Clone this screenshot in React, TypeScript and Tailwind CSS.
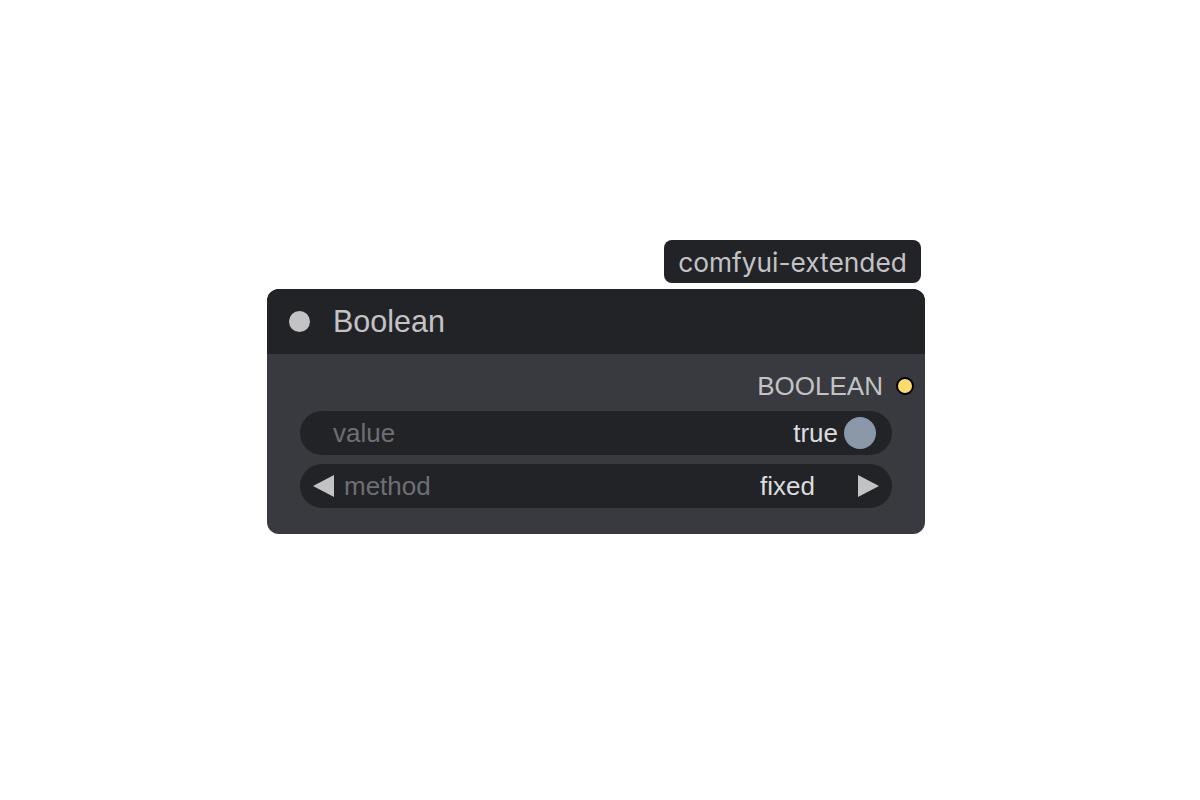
const App = () => {
  return (
    <div className="relative w-[1200px] h-[800px] bg-white" style={{ fontFamily: '"Liberation Sans", Arial, sans-serif' }}>
      {/* Source badge */}
      <div className="absolute left-[664px] top-[240px] h-[43px] w-[257px] pt-[3px] rounded-lg bg-[#222327] flex items-center justify-center">
        <span className="text-[26.3px] text-[#c3c3c6] leading-none" style={{ fontFamily: 'Inter, "Noto Sans", sans-serif' }}>
          comfyui-extended
        </span>
      </div>

      {/* Node */}
      <div className="absolute left-[267px] top-[289px] w-[658px] rounded-[12px] bg-[#393a3f] overflow-hidden">
        <div className="h-[65px] bg-[#222327] flex items-center pl-[22px] gap-[23px]">
          <div className="w-[21px] h-[21px] rounded-full bg-[#c3c3c6]" />
          <span className="text-[30.5px] text-[#c3c3c6] leading-none">Boolean</span>
        </div>

        <div className="px-[33px] pb-[26px]">
          <div className="h-[57px] pt-[7px] flex items-center justify-end gap-[13px] -mr-[22px]">
            <span className="text-[26px] text-[#c3c3c6] leading-none">BOOLEAN</span>
            <div className="w-[18px] h-[18px] rounded-full bg-[#fddc6e] border-2 border-black" />
          </div>

          <div className="flex flex-col gap-[9px]">
            <div className="h-[44px] rounded-full bg-[#222327] flex items-center pl-[33px] pr-[16px]">
              <span className="text-[26px] text-[#6e6f74] leading-none">value</span>
              <span className="ml-auto text-[26px] text-[#dcdcde] leading-none">true</span>
              <div className="ml-[6px] w-[32px] h-[32px] rounded-full bg-[#8a98aa]" />
            </div>

            <div className="h-[44px] rounded-full bg-[#222327] flex items-center pl-[13px] pr-[13px]">
              <svg width="22" height="22" viewBox="0 0 22 22">
                <polygon points="21,0 21,22 0,11" fill="#c3c3c6" />
              </svg>
              <span className="ml-[9px] text-[26px] text-[#6e6f74] leading-none">method</span>
              <span className="ml-auto text-[26px] text-[#dcdcde] leading-none">fixed</span>
              <svg className="ml-[42px]" width="22" height="22" viewBox="0 0 22 22">
                <polygon points="1,0 1,22 22,11" fill="#c3c3c6" />
              </svg>
            </div>
          </div>
        </div>
      </div>
    </div>
  );
};

export default App;
